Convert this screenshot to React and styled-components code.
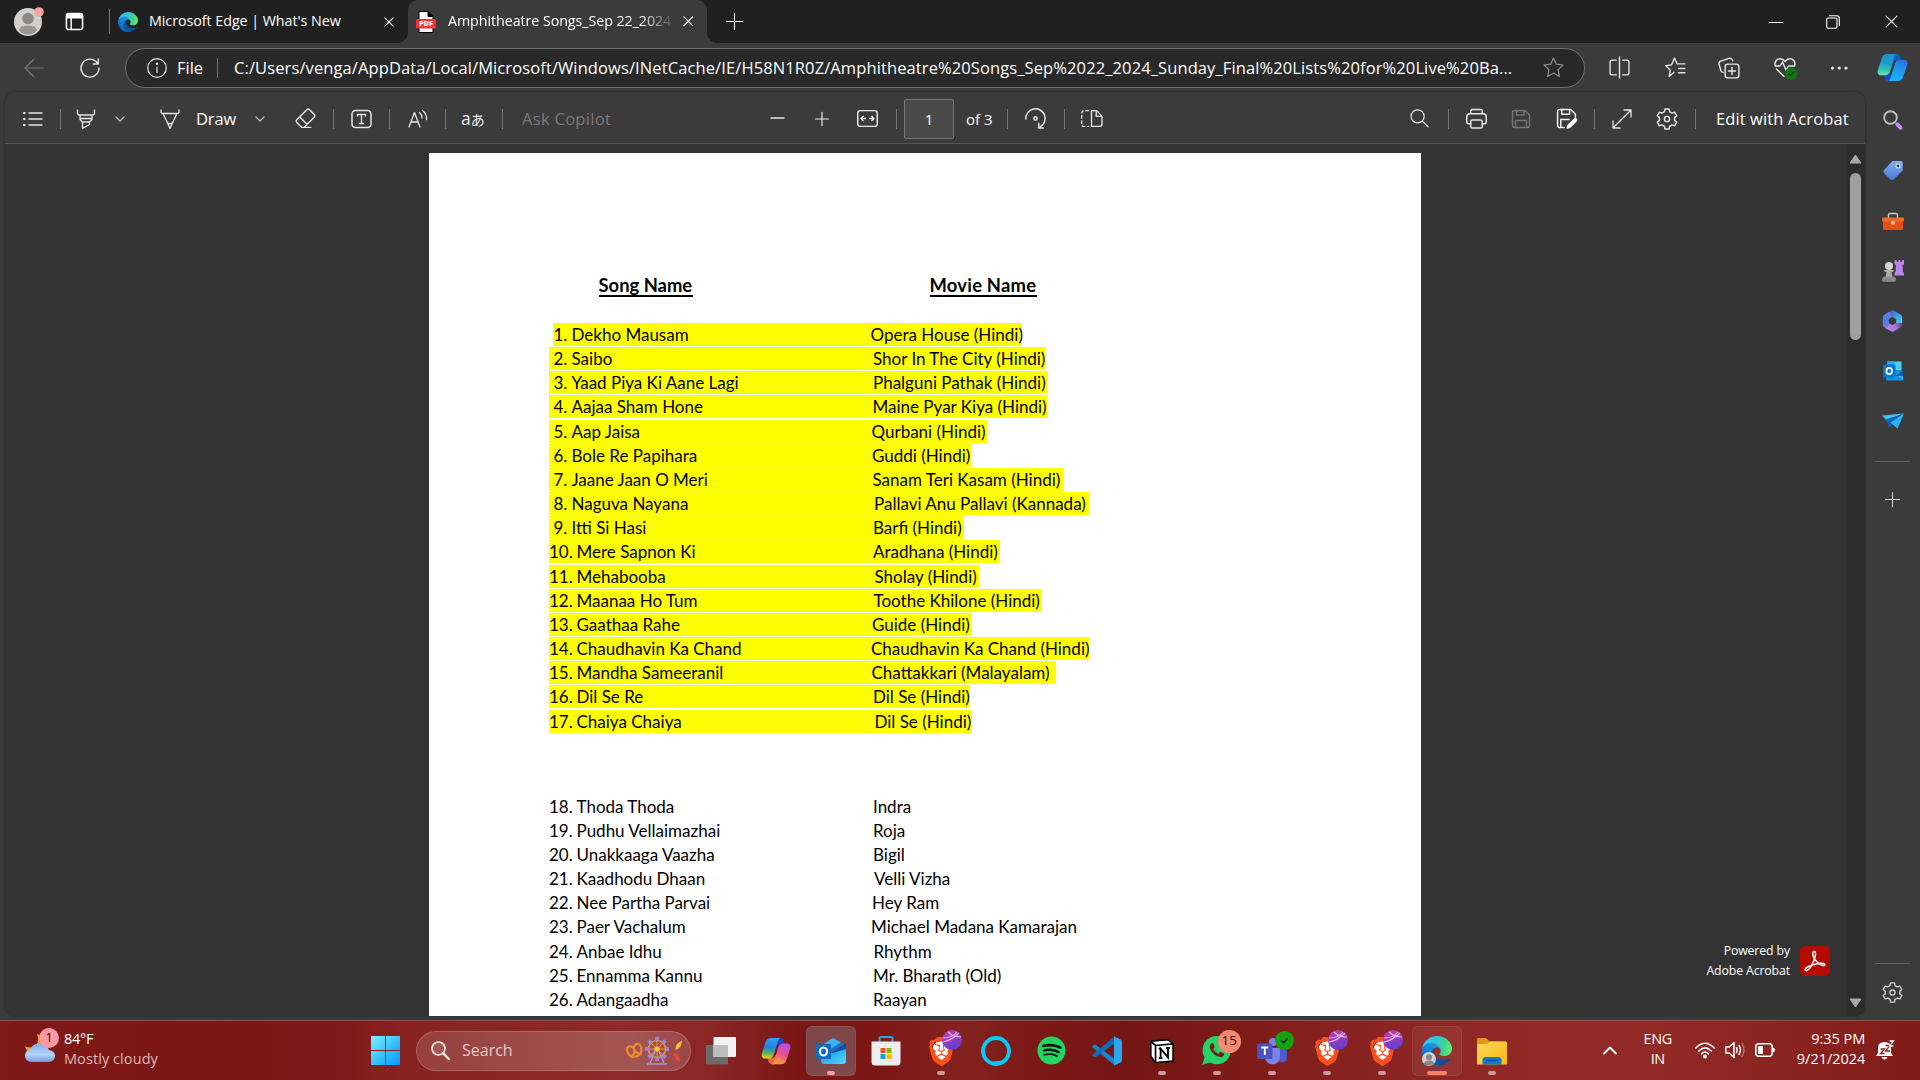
import React from "react";
import styled, { createGlobalStyle, css } from "styled-components";
import { FaSpotify } from "react-icons/fa6";
import { SiBrave } from "react-icons/si";
import { IoLogoWhatsapp } from "react-icons/io";

const UI = `"Open Sans", "Noto Sans", sans-serif`;

const Global = createGlobalStyle`
  *, *::before, *::after { box-sizing: border-box; }
  body { margin: 0; background: #3b3b3b; overflow: hidden; }
`;

const Screen = styled.div`
  width: 1920px;
  height: 1080px;
  display: flex;
  flex-direction: column;
  overflow: hidden;
  font-family: ${UI};
  color: #fff;
  svg { display: block; flex: none; overflow: visible; }
`;

/* ---------- shared parts ---------- */
const Tool = styled.span`
  flex: none;
  display: flex;
  align-items: center;
  justify-content: center;
  width: ${(p) => p.$w || 20}px;
  height: ${(p) => p.$h || 24}px;
  margin-left: ${(p) => p.$ml || 0}px;
  color: ${(p) => p.$c || "#e6e6e6"};
`;
const Rule = styled.span`
  flex: none;
  width: 1px;
  height: ${(p) => p.$h || 20}px;
  margin-left: ${(p) => p.$ml}px;
  background: #757575;
`;
const Label = styled.span`
  flex: none;
  width: ${(p) => p.$w}px;
  margin-left: ${(p) => p.$ml}px;
  white-space: nowrap;
  font-size: ${(p) => p.$size || 16.5}px;
  line-height: 24px;
  letter-spacing: ${(p) => p.$ls || 0}px;
  color: ${(p) => p.$c || "#fff"};
`;
const Spring = styled.span`flex: 1;`;
const CJK = styled.span`
  font-family: "Noto Sans CJK JP", sans-serif;
  font-size: 14px;
`;

/* ---------- tab strip ---------- */
const TabStrip = styled.header`
  flex: none;
  height: 43px;
  display: flex;
  align-items: center;
  padding: 0 22px 0 14px;
  background: #202020;
`;
const TabTitle = styled.span`
  flex: none;
  width: ${(p) => p.$w}px;
  margin-left: 11px;
  padding-bottom: 2px;
  overflow: hidden;
  white-space: nowrap;
  font-size: 14.3px;
  letter-spacing: ${(p) => p.$ls || 0}px;
  line-height: 24px;
  ${(p) => p.$fade && css`mask-image: linear-gradient(90deg, #000 86%, transparent 102%);`}
`;
const ActiveTab = styled.div`
  flex: none;
  align-self: stretch;
  width: 299px;
  margin-left: 13px;
  padding: 0 8px 0 7px;
  display: flex;
  align-items: center;
  position: relative;
  background: #3b3b3b;
  border-radius: 10px 10px 0 0;
  &::before, &::after {
    content: "";
    position: absolute;
    bottom: 0;
    width: 10px;
    height: 10px;
  }
  &::before { left: -10px; background: radial-gradient(circle at 0 0, transparent 9.5px, #3b3b3b 10px); }
  &::after { right: -10px; background: radial-gradient(circle at 100% 0, transparent 9.5px, #3b3b3b 10px); }
`;

/* ---------- address row ---------- */
const NavRow = styled.div`
  flex: none;
  height: 49px;
  display: flex;
  align-items: center;
  background: #3b3b3b;
`;
const AddressBar = styled.div`
  flex: none;
  width: 1460px;
  height: 40px;
  margin-left: 25px;
  padding: 0 20px 0 20px;
  display: flex;
  align-items: center;
  background: #292929;
  border: 1px solid #6e6e6e;
  border-radius: 20px;
`;

/* ---------- body ---------- */
const Body = styled.div`
  flex: none;
  height: 928px;
  display: flex;
  padding: 0 0 4px 5px;
  background: #3b3b3b;
`;
const Viewer = styled.main`
  width: 1860px;
  display: flex;
  flex-direction: column;
  border-radius: 10px;
  overflow: hidden;
  background: #333;
  box-shadow: 0 0 3px rgba(0, 0, 0, 0.35);
`;
const PdfBar = styled.div`
  flex: none;
  height: 52px;
  display: flex;
  align-items: center;
  padding: 2px 17px 0 0;
  background: #3b3b3b;
  border-bottom: 1px solid #545454;
`;
const PageBox = styled.span`
  flex: none;
  width: 50px;
  height: 40px;
  margin-left: 7px;
  display: flex;
  align-items: center;
  justify-content: center;
  font-size: 15px;
  background: #4a4a4a;
  border: 1px solid #767676;
  border-radius: 2px;
`;
const Canvas = styled.div`
  flex: 1;
  min-height: 0;
  display: flex;
`;
const LeftSpace = styled.div`flex: none; width: 424px;`;
const RightSpace = styled.div`
  flex: 1;
  display: flex;
  justify-content: flex-end;
  align-items: flex-end;
  padding: 0 16px 35px 0;
`;
const Powered = styled.div`
  display: flex;
  align-items: center;
  gap: 10px;
  font-size: 12.3px;
  line-height: 20px;
  letter-spacing: -0.12px;
  text-align: right;
`;
const PoweredText = styled.div`padding-top: 1px;`;
const Paper = styled.section`
  flex: none;
  width: 992px;
  margin: 9px 0 0;
  overflow: hidden;
  background: #fff;
  color: #000;
  font-family: Lato, sans-serif;
  font-size: 17px;
`;
const Headings = styled.div`
  display: flex;
  height: 24px;
  margin: 120px 0 26px 169.5px;
`;
const Heading = styled.span`
  height: 24px;
  width: ${(p) => p.$w}px;
  margin-right: ${(p) => p.$mr || 0}px;
  white-space: nowrap;
  font-size: 18.4px;
  font-weight: 700;
  line-height: 25px;
  letter-spacing: ${(p) => p.$ls}px;
  border-bottom: 2px solid #000;
`;
const SongRow = styled.div`
  height: 24.17px;
  padding-left: ${(p) => p.$left}px;
`;
const Mark = styled.div`
  width: ${(p) => p.$w}px;
  height: 23px;
  display: flex;
  white-space: nowrap;
  line-height: 24px;
  background: ${(p) => (p.$hl ? "#ff0" : "transparent")};
`;
const Song = styled.span`
  flex: none;
  display: flex;
  width: ${(p) => p.$w}px;
  padding-left: ${(p) => p.$pad}px;
`;
const Num = styled.span`
  flex: none;
  width: ${(p) => p.$w}px;
`;
const Movie = styled.span`flex: none;`;
const Break = styled.div`height: 61px;`;

const Scroll = styled.div`
  flex: none;
  width: 19px;
  display: flex;
  flex-direction: column;
  align-items: center;
  justify-content: space-between;
  padding: 10px 0 8px;
  background: #2c2c2c;
`;
const ScrollTop = styled.div`
  display: flex;
  flex-direction: column;
  align-items: center;
  gap: 9px;
`;
const Thumb = styled.div`
  width: 11px;
  height: 167px;
  border-radius: 6px;
  background: #9f9f9f;
`;

const SideBar = styled.aside`
  flex: 1;
  display: flex;
  flex-direction: column;
  align-items: center;
  padding: 14px 0 10px;
`;
const SideItem = styled.span`
  flex: none;
  height: 28px;
  width: 28px;
  margin-bottom: ${(p) => p.$mb ?? 22.3}px;
  display: flex;
  align-items: center;
  justify-content: center;
  color: #d0d0d0;
`;
const SideRule = styled.span`
  flex: none;
  width: 35px;
  height: 1px;
  margin-bottom: ${(p) => p.$mb}px;
  background: #5f5f5f;
`;

/* ---------- taskbar ---------- */
const TaskBar = styled.footer`
  flex: none;
  height: 60px;
  display: flex;
  align-items: center;
  border-top: 1px solid #8f5350;
  background: linear-gradient(90deg, #801a18 0, #7b1614 190px, #7c1817 330px, #872220 400px, #8c2b29 620px,
    #8b2726 700px, #7a1715 800px, #7c1715 880px, #842220 960px, #7c1816 1040px, #741614 1130px, #7c1a18 1230px,
    #872220 1340px, #902926 1480px, #922a26 1640px, #8a2420 1780px, #7f1c18 1920px);
`;
const Weather = styled.div`
  width: 371px;
  padding: 0 0 3px 24px;
  display: flex;
  align-items: center;
  font-size: 14.5px;
  line-height: 20px;
  white-space: nowrap;
`;
const WeatherIcon = styled.span`position: relative;`;
const WeatherText = styled.div`margin-left: 8px;`;
const Warm = styled.div`letter-spacing: -0.3px;`;
const Dim = styled.div`color: #ddb9b8; letter-spacing: 0.08px;`;
const SearchPill = styled.div`
  flex: none;
  width: 275px;
  height: 40px;
  margin-left: 16px;
  padding: 0 6px 0 14px;
  display: flex;
  align-items: center;
  border: 1px solid rgba(255, 255, 255, 0.18);
  border-radius: 20px;
  background: linear-gradient(90deg, rgba(255, 255, 255, 0.13), rgba(255, 255, 255, 0.2) 80%, rgba(255, 255, 255, 0.15));
`;
const SearchText = styled.span`
  flex: 1;
  margin-left: 12px;
  padding-bottom: 1px;
  font-size: 16px;
  color: #e6cbca;
`;
const Apps = styled.div`
  flex: none;
  display: flex;
  gap: 5.1px;
  margin-left: 5px;
`;
const AppTile = styled.div`
  position: relative;
  width: 50px;
  height: 50px;
  display: flex;
  align-items: center;
  justify-content: center;
  border-radius: 6px;
  background: ${(p) => p.$bg || "transparent"};
  border: 1px solid ${(p) => (p.$bg ? "rgba(255,255,255,0.07)" : "transparent")};
  &::after {
    content: "";
    display: ${(p) => (p.$dot ? "block" : "none")};
    position: absolute;
    bottom: 0;
    left: 50%;
    width: ${(p) => p.$dotw || 8}px;
    height: 4px;
    transform: translateX(-50%);
    border-radius: 2px;
    background: ${(p) => p.$dot};
  }
`;
const Badge = styled.span`
  position: absolute;
  top: ${(p) => p.$t ?? 3}px;
  right: ${(p) => p.$r ?? 3}px;
  width: ${(p) => p.$s || 20}px;
  height: ${(p) => p.$s || 20}px;
  display: flex;
  align-items: center;
  justify-content: center;
  border-radius: 50%;
  font-size: 13.5px;
  line-height: 1;
  color: #1d1010;
  background: ${(p) => p.$bg || "transparent"};
`;
const Profile = styled.span`
  position: absolute;
  left: 9px;
  bottom: 9px;
`;
const Tint = styled.span`
  display: flex;
  border-radius: 50%;
  color: ${(p) => p.$c};
  background: ${(p) => (p.$under ? `radial-gradient(circle, ${p.$under} 11px, transparent 11.5px)` : "none")};
`;
const BraveMark = styled.span`
  display: flex;
  margin-top: 2px;
  color: #fb4f1c;
  background: radial-gradient(ellipse at 50% 47%, #fff 9px, transparent 9.5px);
`;
const Tray = styled.div`
  flex: 1;
  display: flex;
  align-items: center;
  padding: 0 25px 1px 0;
`;
const TrayText = styled.div`
  width: ${(p) => p.$w}px;
  margin-left: ${(p) => p.$ml}px;
  padding-bottom: 2px;
  font-size: 14.5px;
  line-height: 20px;
  letter-spacing: ${(p) => p.$ls || 0}px;
  text-align: ${(p) => p.$align};
  white-space: nowrap;
`;

/* ---------- icons ---------- */
function Line({ s = 20, w = 1.2, children, fill = "none", vb = 20 }) {
  return (
    <svg width={s} height={s} viewBox={`0 0 ${vb} ${vb}`} fill={fill} stroke="currentColor" strokeWidth={w} strokeLinecap="round" strokeLinejoin="round">
      {children}
    </svg>
  );
}
function gearPath(cx, cy, ro, ri) {
  const pts = [];
  for (let i = 0; i < 6; i++) {
    const a = (i * Math.PI) / 3 - Math.PI / 2;
    [[-0.34, ri], [-0.2, ro], [0.2, ro], [0.34, ri]].forEach(([d, r]) => {
      pts.push(`${(cx + r * Math.cos(a + d)).toFixed(2)} ${(cy + r * Math.sin(a + d)).toFixed(2)}`);
    });
  }
  return `M${pts.join("L")}Z`;
}
const Gear = ({ s = 22 }) => (
  <Line s={s} w={1.3}>
    <path d={gearPath(10, 10, 9.3, 7)} />
    <circle cx="10" cy="10" r="2.4" />
  </Line>
);
const Chevron = ({ s = 10 }) => <Line s={s} vb={10} w={1.2}><path d="M1 3l4 4 4-4" /></Line>;
const Cross = ({ s = 12, w = 1.3 }) => <Line s={s} vb={12} w={w}><path d="M1 1l10 10M11 1L1 11" /></Line>;
const Plus = ({ s = 18, w = 1.2 }) => <Line s={s} vb={18} w={w}><path d="M9 0.5v17M0.5 9h17" /></Line>;

const Edge = ({ s, id }) => (
  <svg width={s} height={s} viewBox="0 0 256 256">
    <defs>
      <linearGradient id={`${id}a`} x1="60" y1="177" x2="241" y2="177" gradientUnits="userSpaceOnUse"><stop stopColor="#0c59a4" /><stop offset="1" stopColor="#114a8b" /></linearGradient>
      <linearGradient id={`${id}b`} x1="153" y1="100" x2="45" y2="222" gradientUnits="userSpaceOnUse"><stop stopColor="#1b9de2" /><stop offset=".5" stopColor="#1383d8" /><stop offset="1" stopColor="#0667c4" /></linearGradient>
      <linearGradient id={`${id}c`} x1="10" y1="60" x2="250" y2="110" gradientUnits="userSpaceOnUse"><stop stopColor="#35c1f1" /><stop offset=".4" stopColor="#2fc3df" /><stop offset=".75" stopColor="#43d28c" /><stop offset="1" stopColor="#66eb6e" /></linearGradient>
    </defs>
    <path fill={`url(#${id}a)`} d="M235.7 192.500a94 94 0 0 1-10.500 4.700 102 102 0 0 1-36 6.400c-47.300 0-88.500-32.500-88.500-74.300A31.500 31.500 0 0 1 117 102c-43 1.800-62 46.400-62 72.500 0 74 76 81.400 91 81.400 7.900 0 12-2.300 19-4.600l1.300-.4a128 128 0 0 0 74.700-52.700 4 4 0 0 0-5.300-5.700Z" />
    <path fill={`url(#${id}b)`} d="M105.700 241.400a79 79 0 0 1-22.700-21.300 81 81 0 0 1 29.500-119.700c3.100-1.500 8.400-4.100 15.500-4a32 32 0 0 1 25.700 13 32 32 0 0 1 6.300 18.700c0-.2 24.500-79.600-80-79.600C36 48.500 0 90 0 126.700a130 130 0 0 0 12 56 128 128 0 0 0 156.500 67.100 75.500 75.500 0 0 1-62.800-8.400Z" />
    <path fill={`url(#${id}c)`} d="M152.300 149c-.8 1-3.300 2.500-3.300 5.700 0 2.600 1.700 5.100 4.700 7.200 14.400 10 41.500 8.700 41.600 8.700a60 60 0 0 0 30.300-8.400A61.400 61.400 0 0 0 256 109.400c.3-22.400-8-37.300-11.300-44C223.500 23.900 177.700 0 128 0A128 128 0 0 0 0 126.200c.5-36.500 36.800-66 80-66 3.500 0 23.500.3 42 10a72.600 72.600 0 0 1 31 29.300c6 10.600 7.200 24.100 7.200 29.500s-2.700 13.300-7.900 20Z" />
  </svg>
);
const Copilot = ({ s, id, warm }) => (
  <svg width={s} height={s} viewBox="0 0 32 32">
    <defs>
      <linearGradient id={`${id}a`} x1=".3" y1="0" x2=".2" y2="1">
        <stop stopColor={warm ? "#2fa0f5" : "#1590d8"} /><stop offset=".45" stopColor={warm ? "#1a86e0" : "#1aa0c8"} /><stop offset=".75" stopColor={warm ? "#5db45a" : "#35c5b5"} /><stop offset="1" stopColor={warm ? "#f5d51c" : "#72e59a"} />
      </linearGradient>
      <linearGradient id={`${id}b`} x1=".7" y1="0" x2=".4" y2="1">
        <stop stopColor={warm ? "#b44df0" : "#2e6ee8"} /><stop offset=".5" stopColor={warm ? "#e6508f" : "#1e9bf0"} /><stop offset="1" stopColor={warm ? "#ffa03c" : "#18b4f5"} />
      </linearGradient>
    </defs>
    <path fill={warm ? "#1c49c9" : "#0c5fb0"} d="M17 2h3.500c2 0 3 1.200 3.600 3l1 3.500h-5c-2 0-3 1-3.600 3l-3 2z" />
    <path fill={warm ? "#f0663c" : "#1746cf"} d="M15 30h-3.500c-2 0-3-1.200-3.600-3l-1-3.500h4.600c2.400 0 3.400-1.200 4-3l2.500-3z" />
    <path fill={`url(#${id}a)`} d="M10.500 2H21c-1.700.6-2.600 2-3.200 4l-4.300 14c-.8 2.500-2 4-5 4H4.500C1 24 0 21.500 1 18L5 6.500C6 3.500 7.500 2 10.500 2Z" />
    <path fill={`url(#${id}b)`} d="M21.500 30H11c1.700-.6 2.600-2 3.200-4l4.300-14c.8-2.500 2-4 5-4h4c3.500 0 4.500 2.500 3.500 6L27 25.500c-1 3-2.500 4.500-5.500 4.500Z" />
  </svg>
);
const Outlook = ({ s, id }) => (
  <svg width={s} height={s} viewBox="0 0 30 30">
    <defs><linearGradient id={id} x1="0" y1="0" x2="1" y2="1"><stop stopColor="#1a8fe0" /><stop offset="1" stopColor="#50d9ff" /></linearGradient></defs>
    <path fill="#1f6fc4" d="M5 9.500 17 2l13 7.500v4L5 20z" />
    <path fill="#39b2f2" d="M5 9.500 17 2l8 4.600L7 17z" />
    <path fill="#0f4f9e" d="M16 16.500 30 7v8L16 22z" />
    <path fill={`url(#${id})`} d="M5 17h12L30 13v12a3 3 0 0 1-3 3H8a3 3 0 0 1-3-3z" />
    <rect x="0" y="8" width="15" height="15" rx="1" fill="#0f6cbd" />
    <ellipse cx="7.500" cy="15.500" rx="3.600" ry="4" fill="none" stroke="#fff" strokeWidth="2.200" />
  </svg>
);
const Orb = () => (
  <svg width="20" height="20" viewBox="0 0 20 20">
    <defs><linearGradient id="orb" x1="0.300" y1="0" x2="0.600" y2="1"><stop stopColor="#c83cae" /><stop offset="1" stopColor="#5b3fd0" /></linearGradient></defs>
    <circle cx="10" cy="10" r="10" fill="url(#orb)" />
    <path d="M1 8c6 0 11-2 14-6M6 2c3 3 8 5 13 5M1 12c6-1 12-5 16-9" stroke="#e6b9ea" strokeWidth="1.100" fill="none" />
  </svg>
);
const BraveApp = ({ dot }) => (
  <AppTile $dot={dot}>
    <BraveMark><SiBrave size={29} /></BraveMark>
    <Badge $t={3} $r={3}><Orb /></Badge>
  </AppTile>
);
const Store = () => (
  <svg width="30" height="30" viewBox="0 0 30 30">
    <path d="M8.500 7V2.500q0-1.500 1.500-1.500h10q1.500 0 1.500 1.500V7" fill="none" stroke="#22a7ea" strokeWidth="2" />
    <path d="M.5 5.500h29V26a3.500 3.500 0 0 1-3.500 3.500H4A3.500 3.500 0 0 1 .5 26z" fill="#eeeeee" />
    <path d="M9.500 12h5v5h-5z" fill="#f25022" /><path d="M15.500 12h5v5h-5z" fill="#7fba00" />
    <path d="M9.500 18h5v5h-5z" fill="#00a4ef" /><path d="M15.500 18h5v5h-5z" fill="#ffb900" />
  </svg>
);
const VsCode = () => (
  <svg width="30" height="30" viewBox="0 0 30 30">
    <path d="M1 9.500l2.200-1.100L23 23v6.500L.6 11.600q-1.100-1.200.4-2.100z" fill="#1685cf" />
    <path d="M1 20.500l2.200 1.100L23 7V.5L.6 18.400q-1.100 1.200.4 2.100z" fill="#0a6fb8" />
    <path d="M22 .300 28.600 3.400Q30 4.200 30 5.600v18.800q0 1.400-1.400 2.200L22 29.700z" fill="#2aa5ef" />
  </svg>
);
const Teams = () => (
  <svg width="30" height="30" viewBox="0 0 30 30">
    <circle cx="25" cy="9" r="3.200" fill="#5059c9" /><path d="M19 13h11v8a5 5 0 0 1-10 1z" fill="#5059c9" />
    <circle cx="16" cy="6" r="4" fill="#7b83eb" /><path d="M8 12h15v9a7.500 7.500 0 0 1-15 0z" fill="#7b83eb" />
    <rect x="0" y="7.500" width="15.500" height="15.500" rx="1.500" fill="#4b53bc" />
    <path d="M4.300 11.500h7M7.800 11.500v7.500" stroke="#fff" strokeWidth="1.900" />
  </svg>
);
const Folder = () => (
  <svg width="30" height="28" viewBox="0 0 30 28">
    <defs><linearGradient id="fold" x1="0" y1="0" x2="1" y2="1"><stop stopColor="#ffd75e" /><stop offset="1" stopColor="#fdb913" /></linearGradient></defs>
    <path d="M0 2.500Q0 1 1.500 1H9l3.500 3.500H28q2 0 2 2V12H0z" fill="#dd9c0e" />
    <path d="M0 7h10l3-2.500h15.500q1.500 0 1.500 1.500v21.500H0z" fill="url(#fold)" />
    <path d="M5.500 27.500V23q0-3 3-3h13q3 0 3 3v4.500z" fill="#1279cf" /><path d="M9 23.500h12" stroke="#074f97" strokeWidth="1.400" strokeLinecap="round" />
  </svg>
);

/* ---------- data: number, song, movie, highlight right edge, movie left edge ---------- */
const marked = [
  ["1.", "Dekho Mausam", "Opera House (Hindi)", 1021.8, 870.5],
  ["2.", "Saibo", "Shor In The City (Hindi)", 1045, 873],
  ["3.", "Yaad Piya Ki Aane Lagi", "Phalguni Pathak (Hindi)", 1046.8, 873],
  ["4.", "Aajaa Sham Hone", "Maine Pyar Kiya (Hindi)", 1046.8, 872.5],
  ["5.", "Aap Jaisa", "Qurbani (Hindi)", 987, 871.5],
  ["6.", "Bole Re Papihara", "Guddi (Hindi)", 971, 872],
  ["7.", "Jaane Jaan O Meri", "Sanam Teri Kasam (Hindi)", 1063, 872.5],
  ["8.", "Naguva Nayana", "Pallavi Anu Pallavi (Kannada)", 1088.5, 874],
  ["9.", "Itti Si Hasi", "Barfi (Hindi)", 963.5, 873],
  ["10.", "Mere Sapnon Ki", "Aradhana (Hindi)", 1000, 873],
  ["11.", "Mehabooba", "Sholay (Hindi)", 979, 874.5],
  ["12.", "Maanaa Ho Tum", "Toothe Khilone (Hindi)", 1042, 873.5],
  ["13.", "Gaathaa Rahe", "Guide (Hindi)", 971, 872],
  ["14.", "Chaudhavin Ka Chand", "Chaudhavin Ka Chand (Hindi)", 1089, 871],
  ["15.", "Mandha Sameeranil", "Chattakkari (Malayalam)", 1055.5, 871.5],
  ["16.", "Dil Se Re", "Dil Se (Hindi)", 970, 873],
  ["17.", "Chaiya Chaiya", "Dil Se (Hindi)", 972, 874.5],
];
const plain = [
  ["18.", "Thoda Thoda", "Indra", 1100, 873],
  ["19.", "Pudhu Vellaimazhai", "Roja", 1100, 873],
  ["20.", "Unakkaaga Vaazha", "Bigil", 1100, 873],
  ["21.", "Kaadhodu Dhaan", "Velli Vizha", 1100, 874],
  ["22.", "Nee Partha Parvai", "Hey Ram", 1100, 872],
  ["23.", "Paer Vachalum", "Michael Madana Kamarajan", 1100, 871],
  ["24.", "Anbae Idhu", "Rhythm", 1100, 873.5],
  ["25.", "Ennamma Kannu", "Mr. Bharath (Old)", 1100, 873],
  ["26.", "Adangaadha", "Raayan", 1100, 873],
];
function SongLine({ row, hl }) {
  const [n, song, movie, right, mx] = row;
  const left = n === "1." ? 553 : 549;
  const short = n.length === 2;
  return (
    <SongRow $left={left - 429}>
      <Mark $hl={hl} $w={right - left}>
        <Song $w={mx - left} $pad={short ? 553.5 - left : 0}>
          <Num $w={short ? 18 : 27.5}>{n}</Num>{song}
        </Song>
        <Movie>{movie}</Movie>
      </Mark>
    </SongRow>
  );
}

const IDLE = "#cf9a9a";

export default function App() {
  return (
    <Screen>
      <Global />
      <TabStrip>
        <Tool $w={28} $h={30}>
          <svg width="28" height="28" viewBox="0 0 28 28">
            <circle cx="14" cy="14" r="14" fill="#d2d0ce" />
            <circle cx="14" cy="10.500" r="5.800" fill="#8a8886" />
            <path d="M5 22.500q0-5 9-5t9 5q-3.500 4-9 4t-9-4z" fill="#979593" />
            <circle cx="25" cy="4" r="4.800" fill="#f7a6a0" />
          </svg>
        </Tool>
        <Tool $ml={22} $c="#fff">
          <Line s={19} w={1.6}><rect x="1.500" y="1.500" width="17" height="17" rx="2.500" /><path d="M2 3h16v3H2z" fill="currentColor" /><path d="M6.500 6v12" /></Line>
        </Tool>
        <Rule $h={25} $ml={25} />
        <Tool $ml={8} $w={20}><Edge s={20} id="e1" /></Tool>
        <TabTitle $w={193} $ls={-0.05}>Microsoft Edge | What's New</TabTitle>
        <Tool $ml={41} $w={12} $c="#fff"><Cross s={10} /></Tool>
        <ActiveTab>
          <Tool $w={22}>
            <svg width="20" height="22" viewBox="0 0 20 22">
              <path d="M3 .5h9l5 5V21.500H3z" fill="#fff" stroke="#000" />
              <path d="M12 .5v5h5z" fill="#000" stroke="#000" />
              <rect x="0" y="8" width="20" height="9.500" rx="1.500" fill="#f2333b" />
              <text x="10" y="15.400" textAnchor="middle" fontFamily="Open Sans, sans-serif" fontWeight="800" fontSize="7.400" fill="#fff">PDF</text>
            </svg>
          </Tool>
          <TabTitle $w={223} $fade $ls={-0.08}>Amphitheatre Songs_Sep 22_2024</TabTitle>
          <Tool $ml={11} $w={12} $c="#fff"><Cross s={10.5} /></Tool>
        </ActiveTab>
        <Tool $ml={18} $w={18} $c="#fff"><Plus s={17} /></Tool>
        <Spring />
        <Tool $w={14} $c="#fff"><Line s={14} vb={14} w={1}><path d="M0.500 7.500h13" /></Line></Tool>
        <Tool $w={14} $ml={43} $c="#fff"><Line s={14} vb={14} w={1.1}><rect x=".7" y="3" width="10.300" height="10.300" rx="1.500" /><path d="M3.500.7h7.300q2.500 0 2.500 2.500v7.300" /></Line></Tool>
        <Tool $w={14} $ml={44} $c="#fff"><Cross s={13} w={1} /></Tool>
      </TabStrip>

      <NavRow>
        <Tool $ml={24} $c="#777"><Line s={20}><path d="M19 10H1M9.500 1.500 1 10l8.500 8.500" /></Line></Tool>
        <Tool $ml={36}><Line s={20} w={1.4}><path d="M19 10A9 9 0 1 1 15.500 3l2 2M18.300 1v5h-5" /></Line></Tool>
        <AddressBar>
          <Tool $w={22}><Line s={20} w={1.2}><circle cx="10" cy="10" r="9.300" /><path d="M10 9v5.500" /><circle cx="10" cy="5.800" r=".6" fill="currentColor" /></Line></Tool>
          <Label $w={27} $ml={9}>File</Label>
          <Rule $ml={13} />
          <Label $w={1285} $ml={16} $ls={0.105}>C:/Users/venga/AppData/Local/Microsoft/Windows/INetCache/IE/H58N1R0Z/Amphitheatre%20Songs_Sep%2022_2024_Sunday_Final%20Lists%20for%20Live%20Ba...</Label>
          <Spring />
          <Tool $w={22} $c="#8a8a8a"><Line s={21} w={1.2}><path d="M10 1l2.700 5.900 6.300.8-4.700 4.400 1.300 6.400L10 15.300l-5.600 3.200 1.300-6.400L1 7.700l6.300-.8z" /></Line></Tool>
        </AddressBar>
        <Tool $w={22} $ml={23}><Line s={21} w={1.3}><path d="M10 0v20M7 3H3Q1 3 1 5v10q0 2 2 2h4M13 3h4q2 0 2 2v10q0 2-2 2h-4" /></Line></Tool>
        <Tool $w={22} $ml={34}><Line s={21} w={1.3}><path d="M8.500 14.500 4 18.500l1-6L.8 8.300 6.200 7.500 9 1l2.500 5.500H19M13 11h6M13 15h6" /></Line></Tool>
        <Tool $w={22} $ml={32}><Line s={22} w={1.3}><rect x="6.500" y="6.500" width="12.500" height="12.500" rx="2.500" /><path d="M12.700 9.500v6.500M9.500 12.700H16M4.500 14Q3 13.500 2.500 12L1 6.500Q.5 4.500 2.500 3.800L10 1.300q2-.6 3 1.200l.5 1" /></Line></Tool>
        <Tool $w={24} $ml={33}>
          <Line s={24} vb={24} w={1.4}>
            <path d="M11 20.500 3.500 13M12 5.500Q9 1.500 5 3.200 1 5.500 2.300 10H7l2.500-4 3.500 8 2.500-4h6Q23 5.500 19 3.200 15 1.500 12 5.500" />
            <circle cx="18" cy="17.500" r="6" fill="#107c10" stroke="none" /><path d="M15.500 17.500l2 2 3.300-3.600" stroke="#0a2d0a" />
          </Line>
        </Tool>
        <Tool $w={20} $ml={32}><Line s={20} fill="currentColor" w={0}><circle cx="3.500" cy="10" r="1.600" /><circle cx="10.300" cy="10" r="1.600" /><circle cx="17" cy="10" r="1.600" /></Line></Tool>
        <Tool $w={32} $h={32} $ml={27}><Copilot s={31} id="cpA" /></Tool>
      </NavRow>

      <Body>
        <Viewer>
          <PdfBar>
            <Tool $ml={18}><Line s={20} w={1.4}><path d="M6 4h13M6 10h13M6 16h13" /><path d="M1 4h.6M1 10h.6M1 16h.6" strokeWidth="2.200" /></Line></Tool>
            <Rule $ml={17} />
            <Tool $ml={15}><Line s={20} w={1.3}><path d="M1.500 1v3q0 2 2 2h13q2 0 2-2V1M4 6v4.500L6.500 13v6.500l7-4V13l2.500-2.500V6M4.500 9.500h11M6.500 13h7" /></Line></Tool>
            <Tool $w={12} $ml={18} $c="#c0c0c0"><Chevron /></Tool>
            <Tool $ml={34}><Line s={20} w={1.3}><path d="M1 1v1.500Q1 4.500 3 4.500h14q2 0 2-2V1M3 4.500 8.500 16 10 19.500 11.500 16 17 4.500M8 14.500h4" /></Line></Tool>
            <Label $w={40} $ml={16} $ls={-0.1}>Draw</Label>
            <Tool $w={12} $ml={18} $c="#c0c0c0"><Chevron /></Tool>
            <Tool $ml={29}><Line s={21} w={1.3}><path d="M6.500 18.500 1.500 13.500q-1-1 0-2L11.500 1.500q1-1 2 0l5 5q1 1 0 2L8.500 18.500zM4.500 8.500l7 7M7 18.500h8" /></Line></Tool>
            <Rule $ml={18} />
            <Tool $ml={18}><Line s={20} w={1.5}><rect x="0" y="1.500" width="19" height="17" rx="3.500" /><path d="M5.500 7V5.500h8V7M9.500 5.500v9M7.500 14.500h4" strokeWidth="1.300" /></Line></Tool>
            <Rule $ml={17} />
            <Tool $ml={18}><Line s={20} w={1.3}><path d="M1 18 6.500 3.500 12 18M3 13h7M11.500 3.500q2.500 2 2.500 5.500M14.500 1.500Q19 5 18.500 10.500" /></Line></Tool>
            <Rule $ml={17} />
            <Label $w={24} $ml={15} $size={17.5} $c="#ececec">a<CJK>あ</CJK></Label>
            <Rule $ml={17} />
            <Label $w={90} $ml={19} $ls={0.3} $c="#797979">Ask Copilot</Label>
            <Tool $ml={155}><Line s={15} vb={15} w={1.4}><path d="M1 7h13" /></Line></Tool>
            <Tool $ml={25}><Plus s={14} w={1.6} /></Tool>
            <Tool $w={22} $ml={24}><Line s={21} w={1.4}><rect x=".7" y="2.500" width="18.600" height="15" rx="2.500" /><path d="M8 10H4M5.800 8 3.800 10l2 2M12 10h4M14.200 8l2 2-2 2" /></Line></Tool>
            <Rule $ml={18} />
            <PageBox>1</PageBox>
            <Label $w={27} $ml={12} $size={15}>of 3</Label>
            <Rule $ml={14} />
            <Tool $w={22} $ml={16}><Line s={21} w={1.4}><path d="M.8 10.500A9.200 9.200 0 1 1 14.500 18M13 14.500V19h4.500" /><circle cx="10" cy="10" r="1.600" /></Line></Tool>
            <Rule $ml={18} />
            <Tool $w={22} $ml={15}><Line s={21} w={1.3}><path d="M10 2.500h5L20 8v7.500q0 2-2 2h-8zM14.500 2.500V8H20" /><path d="M7 2.500H3Q.7 2.500.7 5v10.500q0 2 2 2H7" strokeDasharray="2.500 2.500" /></Line></Tool>
            <Spring />
            <Tool><Line s={19} w={1.3}><circle cx="8" cy="7.700" r="6.900" /><path d="M13 12.700l6 6" /></Line></Tool>
            <Rule $ml={19} />
            <Tool $w={22} $ml={16}><Line s={21} w={1.4}><path d="M4.500 5.500V3q0-1.500 1.500-1.500h8q1.500 0 1.500 1.500v2.500M4.500 15H2.500Q.7 15 .7 13V8.500Q.7 5.500 3.700 5.500h12.600q3 0 3 3V13q0 2-1.800 2h-2" /><rect x="4.500" y="11.500" width="11" height="7.500" rx="1.500" /></Line></Tool>
            <Tool $ml={24} $c="#757575"><Line s={20} w={1.4}><path d="M3.500 1.500h10.500l4.500 4.500v10.500q0 2-2 2h-13q-2 0-2-2v-13q0-2 2-2zM5.500 1.500v4.500h7.500v-4.500M4.500 18.500v-7h11v7" /></Line></Tool>
            <Tool $w={22} $ml={24} $c="#f4f4f4"><Line s={21} w={1.4}><path d="M8 18.500H3.500q-2 0-2-2v-13q0-2 2-2h10.500l4.500 4.500v2.500M5.500 1.500v4.500h7.500v-4.500M4.500 18v-7h8" /><path d="M11.500 16.500l6-6q1-.8 1.800 0t0 1.800l-6 6-2.600.8z" fill="currentColor" /></Line></Tool>
            <Rule $ml={17} />
            <Tool $ml={17}><Line s={20} w={1.3}><path d="M12 1h7v7M19 1 1 19M1 12v7h7" /></Line></Tool>
            <Tool $w={22} $ml={24}><Gear s={22} /></Tool>
            <Rule $ml={17} />
            <Label $w={132} $ml={20} $ls={0.1}>Edit with Acrobat</Label>
          </PdfBar>
          <Canvas>
            <LeftSpace />
            <Paper>
              <Headings>
                <Heading $w={94} $mr={237} $ls={0}>Song Name</Heading>
                <Heading $w={107} $ls={0.22}>Movie Name</Heading>
              </Headings>
              {marked.map((r) => <SongLine key={r[0]} row={r} hl />)}
              <Break />
              {plain.map((r) => <SongLine key={r[0]} row={r} />)}
            </Paper>
            <RightSpace>
              <Powered>
                <PoweredText>Powered by<br />Adobe Acrobat</PoweredText>
                <svg width="30" height="30" viewBox="0 0 30 30">
                  <rect width="30" height="30" rx="5" fill="#b30b00" />
                  <path d="M14 5.500c2-.5 2 3.500.5 7.500-2 5.500-5 11-8 11.500-2 .3-2-2 2-4 5-2.500 12-4 15-3 2 .7 1.800 2.300-.5 2-4-.4-9.500-6.500-10.200-10.500-.3-2 .200-3.200 1.200-3.500z" fill="none" stroke="#fff" strokeWidth="1.500" />
                </svg>
              </Powered>
            </RightSpace>
            <Scroll>
              <ScrollTop>
                <svg width="13" height="10" viewBox="0 0 13 10"><path d="M6.500 1 12 9H1z" fill="#a8a8a8" stroke="#a8a8a8" strokeLinejoin="round" /></svg>
                <Thumb />
              </ScrollTop>
              <svg width="13" height="10" viewBox="0 0 13 10"><path d="M6.500 9 12 1H1z" fill="#a8a8a8" stroke="#a8a8a8" strokeLinejoin="round" /></svg>
            </Scroll>
          </Canvas>
        </Viewer>

        <SideBar>
          <SideItem>
            <svg width="20" height="20" viewBox="0 0 20 20"><circle cx="7.500" cy="7.500" r="6.300" fill="none" stroke="#bdbdbd" strokeWidth="1.900" /><path d="M14.300 14.300l3.200 3.400" stroke="#c48bf0" strokeWidth="4" strokeLinecap="round" /></svg>
          </SideItem>
          <SideItem>
            <svg width="20" height="20" viewBox="0 0 20 20"><defs><linearGradient id="tag" x1="0" y1="0" x2="0" y2="1"><stop stopColor="#7fb2f5" /><stop offset="1" stopColor="#4a78d8" /></linearGradient></defs><path d="M9.500.9H18q1.800 0 1.800 1.800V10.400L10.500 19.400q-1.500 1.400-3 0L1 12.900q-1.400-1.400 0-3z" fill="url(#tag)" /><circle cx="15" cy="5.900" r="1.900" fill="#223" stroke="#e8e8e8" strokeWidth="1.200" /></svg>
          </SideItem>
          <SideItem>
            <svg width="22" height="18" viewBox="0 0 22 18"><path d="M6.500 6.500V3Q6.500 1.500 8 1.500h6q1.500 0 1.500 1.500V6.500" fill="none" stroke="#c9c9c9" strokeWidth="1.400" /><rect x="1" y="7.500" width="20" height="10.500" rx="1.500" fill="#e8500f" /><rect x="0" y="5.500" width="22" height="4" rx="1" fill="#f26a22" /><circle cx="11" cy="11" r="2.100" fill="#c8c8c8" /></svg>
          </SideItem>
          <SideItem>
            <svg width="22" height="22" viewBox="0 0 22 22"><path d="M12.500 0h2v1.700h1.800V0h2v1.700H20V0h2v4l-1.500 1.500.5 6 1 1.500V15.500H12.500V13l1-1.500.5-6L12.500 4z" fill="#b983ea" /><circle cx="7" cy="6" r="4" fill="#d6d6d6" /><path d="M2.500 10h9v2H9.500l1 5h-7l1-5h-2z" fill="#aaa" /><path d="M0 20q0-3.500 3-3.500h8q3 0 3 3.500 0 1.800-1.500 1.800h-11Q0 21.800 0 20z" fill="#8a8a8a" /></svg>
          </SideItem>
          <SideItem>
            <svg width="21" height="22" viewBox="0 0 21 22" fill="none" strokeWidth="6" strokeLinejoin="round">
              <defs>
                <linearGradient id="m1" x1="10" y1="2" x2="3" y2="18" gradientUnits="userSpaceOnUse"><stop stopColor="#9a6fe0" /><stop offset=".5" stopColor="#3f7fe0" /><stop offset="1" stopColor="#8f6fe0" /></linearGradient>
                <linearGradient id="m2" x1="9" y1="3" x2="19" y2="12" gradientUnits="userSpaceOnUse"><stop stopColor="#3a72cf" /><stop offset="1" stopColor="#45cdf7" /></linearGradient>
                <linearGradient id="m3" x1="4" y1="18" x2="18" y2="12" gradientUnits="userSpaceOnUse"><stop stopColor="#c38bf0" /><stop offset=".6" stopColor="#a875d8" /><stop offset="1" stopColor="#6a4a94" /></linearGradient>
              </defs>
              <path d="M17.200 11v3.700L10.500 18.700 5 15.600" stroke="url(#m3)" />
              <path d="M8 4.700l2.500-1.400 6.700 4V13" stroke="url(#m2)" />
              <path d="M8.500 4.500 3.800 7.300v7.400L6 16" stroke="url(#m1)" />
            </svg>
          </SideItem>
          <SideItem>
            <svg width="20" height="20" viewBox="0 0 20 20"><path d="M4 1.500Q4 .5 5 .5h13.500v9H4z" fill="#50d0f8" /><path d="M4 .5h7.500v9H4z" fill="#28a8ea" /><path d="M3 10h17v9.500H4.500Q3 19.500 3 18z" fill="#1490df" /><path d="M20 9.500v9L13 14z" fill="#35b8f1" /><path d="M20 9.500 12 15l8 0z" fill="#0a62ac" /><rect x="0" y="3.500" width="12.500" height="13" rx="1.200" fill="#0078d4" /><ellipse cx="6.200" cy="10" rx="2.800" ry="3.100" fill="none" stroke="#fff" strokeWidth="1.800" /></svg>
          </SideItem>
          <SideItem $mb={25}>
            <svg width="22" height="17" viewBox="0 0 22 17"><path d="M0 2.500 22 .5 6 9z" fill="#37c6f4" /><path d="M4 6.500 22 .5 7 15z" fill="#0b63b5" /><path d="M22 .5 15.500 15.500 8.500 9.500z" fill="#2cb1ee" /></svg>
          </SideItem>
          <SideRule $mb={24} />
          <SideItem $mb={0}><Plus s={15} w={1.3} /></SideItem>
          <Spring />
          <SideRule $mb={14} />
          <SideItem $mb={0}><Gear s={21} /></SideItem>
        </SideBar>
      </Body>

      <TaskBar>
        <Weather>
          <WeatherIcon>
            <svg width="32" height="30" viewBox="0 0 32 30"><defs><linearGradient id="cl" x1="0" y1="0" x2="0" y2="1"><stop stopColor="#7fb0f2" /><stop offset=".6" stopColor="#b4d2fa" /><stop offset="1" stopColor="#6f9ae6" /></linearGradient></defs>
              <path d="M13 0q3 7-1 11T1 12.500Q3 20 12 20q9-4 7-14Q17 1 13 0z" fill="#f2a12a" /><path d="M8 28q-7 0-7-6.500 0-5 5.500-6Q8 9.500 15.500 9.500T25 16q6 1 6 6t-6 6z" fill="url(#cl)" /></svg>
            <Badge $bg="#ff99a4" $t={-6} $r={-3} $s={20}>1</Badge>
          </WeatherIcon>
          <WeatherText><Warm>84°F</Warm><Dim>Mostly cloudy</Dim></WeatherText>
        </Weather>
        <svg width="29" height="29" viewBox="0 0 29 29"><defs><linearGradient id="win" x1="0" y1="0" x2="29" y2="29" gradientUnits="userSpaceOnUse"><stop stopColor="#7ff0fd" /><stop offset=".55" stopColor="#34c0fb" /><stop offset="1" stopColor="#0a96fa" /></linearGradient></defs><path d="M0 0h14v14H0zM15 0h14v14H15zM0 15h14v14H0zM15 15h14v14H15z" fill="url(#win)" /></svg>
        <SearchPill>
          <svg width="19" height="19" viewBox="0 0 19 19"><circle cx="7.500" cy="7.500" r="6.500" fill="rgba(255,255,255,.12)" stroke="#f0e6e6" strokeWidth="1.700" /><path d="M12.300 12.300l5.500 5.700" stroke="#f0e6e6" strokeWidth="2.400" strokeLinecap="round" /></svg>
          <SearchText>Search</SearchText>
          <svg width="58" height="30" viewBox="0 0 58 30">
            <g transform="translate(8.500 14.500) rotate(-18)" fill="none" stroke="#f0892e" strokeWidth="2.200" strokeLinecap="round">
              <path d="M-4.500 5.500C-9-1-7.500-5.500-4-5.500S1 -1.500 0 1 M4.500 5.500C9-1 7.500-5.500 4-5.500S-1-1.500 0 1M0 1 4 5.500M0 1-4 5.500M-4.500 5.500Q0 7 4.500 5.500" />
            </g>
            <g transform="translate(31 13)"><circle r="8.500" fill="none" stroke="#e8953a" strokeWidth="1.600" />{[0, 45, 90, 135].map((a) => <path key={a} d="M-9 0H9" transform={`rotate(${a})`} stroke="#e8953a" strokeWidth="1" />)}{[0, 45, 90, 135, 180, 225, 270, 315].map((a) => <rect key={a} x="8.200" y="-1.900" width="3.800" height="3.800" transform={`rotate(${a})`} fill="#9a86d8" />)}<circle r="2.600" fill="#ffc53a" /><path d="M-2 3-7 14M2 3 7 14M-10 15H10" stroke="#a992dd" strokeWidth="1.500" /></g>
            <path d="M56 5q-7 2-6.500 9 5.500-1 6.500-9z" fill="#f5bd33" /><path d="M47 16.500q7 2 7 9.500-6-1.500-7-9.500z" fill="#e2493c" />
          </svg>
        </SearchPill>
        <Apps>
          <AppTile><svg width="30" height="28" viewBox="0 0 30 28"><rect x="0" y="8" width="22" height="19.500" fill="#6b6b6b" rx="1" /><rect x="7.500" y="0" width="22.500" height="20" fill="#f3f3f3" rx="1" /><path d="M7.500 8H22v12H7.500z" fill="#bdbdbd" /></svg></AppTile>
          <AppTile><Copilot s={30} id="cpB" warm /></AppTile>
          <AppTile $bg="#80474a" $dot="#ff99a4"><Outlook s={30} id="ol" /></AppTile>
          <AppTile><Store /></AppTile>
          <BraveApp dot={IDLE} />
          <AppTile><svg width="30" height="30" viewBox="0 0 30 30"><circle cx="15" cy="15" r="13" fill="none" stroke="#00caff" strokeWidth="3.800" /><path d="M13 25.500v4q6-2 9-5z" fill="#00caff" /></svg></AppTile>
          <AppTile><Tint $c="#1ed760" $under="#10130f"><FaSpotify size={29} /></Tint></AppTile>
          <AppTile><VsCode /></AppTile>
          <AppTile $dot={IDLE}>
            <svg width="24" height="26" viewBox="0 0 26 26"><path d="M1 2.500 19 .8 25 5v19L6 25.500 1 19z" fill="#fff" stroke="#000" strokeWidth="1.500" strokeLinejoin="round" /><path d="M6 7 25 5.300V24L6 25.500zM1.500 3 6 7" fill="#fff" stroke="#000" strokeWidth="1.800" strokeLinejoin="round" /><path d="M11.500 20.500V10.500L19.500 20V9.500M9.500 10.500h3M17.500 9.700h4M9.500 20.700H13.500" fill="none" stroke="#000" strokeWidth="2" /></svg>
          </AppTile>
          <AppTile $dot={IDLE}><Tint $c="#25d366"><IoLogoWhatsapp size={33} /></Tint><Badge $bg="#f58a70" $t={3} $r={0} $s={23}>15</Badge></AppTile>
          <AppTile $dot={IDLE}><Teams /><Badge $bg="#13a10e" $t={4} $r={2} $s={19}><Line s={11} vb={11} w={1.3}><path d="M2.500 5.800l2 2 4-4.300" stroke="#111" /></Line></Badge></AppTile>
          <BraveApp dot={IDLE} />
          <BraveApp dot={IDLE} />
          <AppTile $bg="rgba(255,255,255,0.06)" $dot="#f5836b" $dotw={20}>
            <Edge s={30} id="e2" />
            <Profile><svg width="14" height="14" viewBox="0 0 14 14"><circle cx="7" cy="7" r="7" fill="#d2d0ce" /><circle cx="7" cy="5.200" r="3" fill="#8a8886" /><path d="M2 11q1-2.500 5-2.500t5 2.500-5 2.500T2 11z" fill="#8a8886" /></svg></Profile>
          </AppTile>
          <AppTile $dot={IDLE}><Folder /></AppTile>
        </Apps>
        <Tray>
          <Tool $w={14} $ml={86} $c="#fff"><Line s={14} vb={14} w={1.8}><path d="M1 10.500l6-6 6 6" /></Line></Tool>
          <TrayText $w={31} $ml={25} $align="center" $ls={-0.3}>ENG<br />IN</TrayText>
          <Tool $w={20} $ml={22} $c="#fff"><Line s={20} w={1.6}><path d="M.8 8Q10-1.500 19.200 8M3.800 11Q10 4.700 16.200 11M6.500 13.800Q10 10.500 13.500 13.800" /><circle cx="10" cy="16.500" r="1.300" fill="currentColor" /></Line></Tool>
          <Tool $w={20} $ml={10} $c="#fff"><Line s={20} w={1.5}><path d="M.8 7v6h3.400L9 17.500v-15L4.200 7zM11.500 7.500q1.500 2.500 0 5M14 5.500q3 4.500 0 9" /><path d="M17 3.500q4 6.500 0 13" stroke="#b07674" /></Line></Tool>
          <Tool $w={20} $ml={10} $c="#fff"><svg width="20" height="14" viewBox="0 0 20 14"><rect x=".8" y=".8" width="16.400" height="12.400" rx="3" fill="none" stroke="#fff" strokeWidth="1.600" /><rect x="3" y="3" width="5" height="8" rx="1" fill="#fff" /><path d="M18 4.500q2 .3 2 2.500t-2 2.500z" fill="#fff" /></svg></Tool>
          <TrayText $w={90} $ml={0} $align="right" $ls={-0.02}>9:35 PM<br />9/21/2024</TrayText>
          <Tool $w={18} $ml={11} $c="#fff"><svg width="18" height="20" viewBox="0 0 18 20"><path d="M2 8q0-6 6.500-6T15 8v5l1.500 2v1H.5v-1L2 13zM5.500 17h6q-.8 2.500-3 2.500t-3-2.500z" fill="#fff" /><path d="M4.500 9h4L4.500 13.500h4M9.500 5.500h4.500l-4.500 5.500h4.500" fill="none" stroke="#8a2320" strokeWidth="1.300" /><path d="M13.500 1h4l-4 5h4" fill="none" stroke="#fff" strokeWidth="1.300" /></svg></Tool>
        </Tray>
      </TaskBar>
    </Screen>
  );
}
